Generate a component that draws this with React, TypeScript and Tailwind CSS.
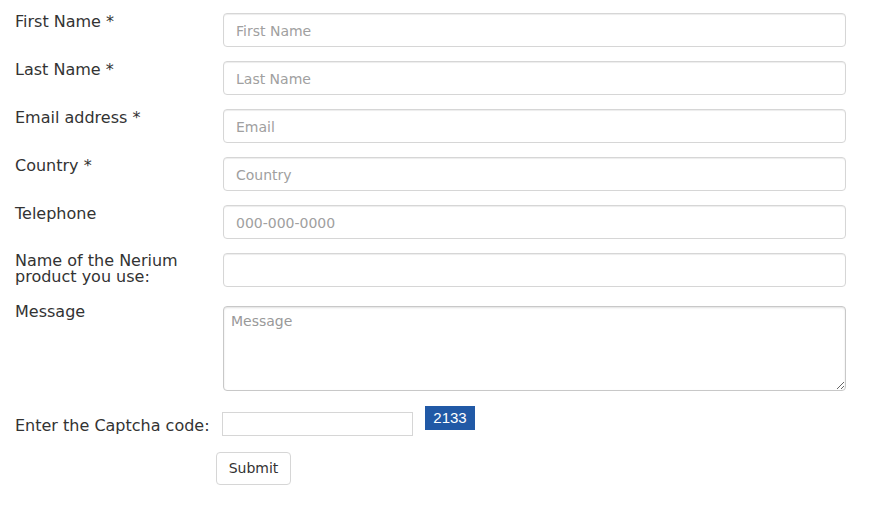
import React from "react";

const font = { fontFamily: '"DejaVu Sans", Verdana, sans-serif' };

function Row({ label, placeholder }: { label: string; placeholder: string }) {
  return (
    <div className="flex items-start">
      <label className="w-[208px] shrink-0 text-[16px] leading-[19px] text-[#333]">{label}</label>
      <input
        placeholder={placeholder}
        className="mt-[1px] h-[34px] flex-1 rounded-[4px] border border-[#d6d6d6] bg-white px-3 pt-[2px] text-[14px] text-[#555] shadow-[inset_0_1px_1px_rgba(0,0,0,0.075)] outline-none placeholder:text-[#a0a0a0]"
      />
    </div>
  );
}

export default function App() {
  return (
    <div className="min-h-[506px] w-[875px] bg-white" style={font}>
      <form className="flex flex-col gap-[13px] pl-[15px] pr-[29px] pt-[12px]">
        <Row label="First Name *" placeholder="First Name" />
        <Row label="Last Name *" placeholder="Last Name" />
        <Row label="Email address *" placeholder="Email" />
        <Row label="Country *" placeholder="Country" />
        <Row label="Telephone" placeholder="000-000-0000" />
        <div className="flex items-start">
          <label className="w-[208px] shrink-0 pt-[1px] pr-[20px] text-[16px] leading-[16px] text-[#333]">
            Name of the Nerium product you use:
          </label>
          <input className="mt-[1px] h-[34px] flex-1 rounded-[4px] border border-[#d6d6d6] bg-white px-3 text-[14px] shadow-[inset_0_1px_1px_rgba(0,0,0,0.075)] outline-none" />
        </div>
        <div className="flex items-start">
          <label className="mt-[2px] w-[208px] shrink-0 text-[16px] leading-[19px] text-[#333]">Message</label>
          <textarea
            placeholder="Message"
            className="mt-[6px] h-[85px] flex-1 rounded-[4px] border border-[#c8c8c8] bg-white pl-[7px] pt-[4px] text-[14px] leading-[20px] shadow-[inset_0_1px_2px_rgba(0,0,0,0.12)] outline-none placeholder:text-[#999]"
          />
        </div>
        <div className="mt-[2px] flex items-start">
          <label className="mt-[10px] w-[207px] shrink-0 text-[16px] leading-[19px] text-[#333]">
            Enter the Captcha code:
          </label>
          <input className="mt-[6px] h-[24px] w-[191px] border border-[#d6d6d6] bg-white px-1 text-[14px] outline-none" />
          <div
            className="ml-[12px] flex h-[24px] w-[50px] items-center justify-center bg-[#2159a6] text-[15px] text-white"
            style={{ fontFamily: '"Liberation Sans", Arial, sans-serif' }}
          >
            2133
          </div>
        </div>
        <div className="mt-[3px] flex">
          <button
            type="button"
            className="ml-[201px] h-[33px] w-[75px] rounded-[4px] border border-[#d6d6d6] bg-white text-[14px] text-[#333]"
          >
            Submit
          </button>
        </div>
      </form>
    </div>
  );
}
